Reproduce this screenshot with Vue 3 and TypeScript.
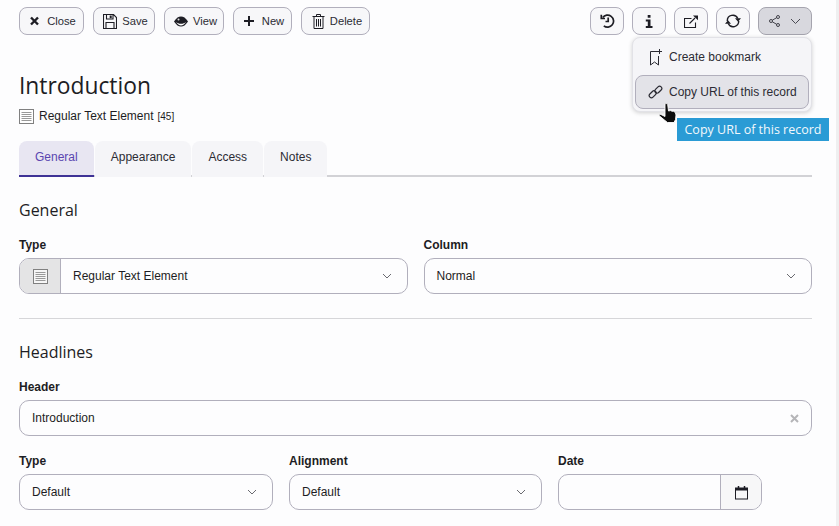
<script setup lang="ts">
const tabs = ['General', 'Appearance', 'Access', 'Notes']
</script>

<template>
  <div class="page">
    <main class="main">
      <div class="toolbar">
        <div class="group">
          <button class="btn" style="width: 65px">
            <svg class="glyph" width="9" height="10" viewBox="0 0 9 10"><path d="M1 1.500l7 7M8 1.500l-7 7" stroke="#1d1d24" stroke-width="2.400" fill="none" /></svg>
            Close
          </button>
          <button class="btn" style="width: 62px">
            <svg width="14" height="15" viewBox="0 0 14 15" fill="none" stroke="#1d1d24" stroke-width="1.100"><path d="M.5 .5h10l3 3v11H.5zM3.500 .5v4.500h6.500V.5M3 14.500V8.500h8v6" /><path d="M6.700 1.500h2v2.700h-2z" fill="#1d1d24" stroke="none" /></svg>
            Save
          </button>
          <button class="btn" style="width: 60px">
            <svg width="14" height="11" viewBox="0 0 14 11"><path d="M0 5.500C2.500 1.800 4.500 .5 7 .5s4.500 1.300 7 5c-2.500 3.700-4.500 5-7 5s-4.500-1.300-7-5z" fill="#1d1d24" /><path d="M1.700 5.800C3.500 8.300 5 9.400 7 9.400s3.500-1.100 5.300-3.600C10.500 7.200 9 7.800 7 7.800S3.500 7.200 1.700 5.800z" fill="#fff" /><circle cx="4.500" cy="3.500" r="1" fill="#ddd" /></svg>
            View
          </button>
          <button class="btn" style="width: 59px">
            <svg class="glyph" width="10" height="10" viewBox="0 0 10 10"><path d="M5 0v10M0 5h10" stroke="#1d1d24" stroke-width="2" fill="none" /></svg>
            New
          </button>
          <button class="btn" style="width: 69px">
            <svg width="13" height="15" viewBox="0 0 13 15" fill="none" stroke="#1d1d24"><path d="M.5 2.500h12M2 2.500v12h9v-12M4.500 2.500v-2h4v2M4.500 5v7.500M6.500 5v7.500M8.500 5v7.500" /></svg>
            Delete
          </button>
        </div>
        <div class="group right">
          <button class="btn icon">
            <svg width="15" height="14" viewBox="0 0 15 14" fill="none" stroke="#1d1d24" stroke-width="1.700"><path d="M2.700 3.600A6 6 0 1 1 3.800 11.800" /><path d="M1.300 .8v3.700h3.700" /><path d="M8.200 3.500v4H5.500" /></svg>
          </button>
          <button class="btn icon">
            <svg width="8" height="13" viewBox="0 0 8 13"><path d="M2.700 0h2.800v2.700H2.700zM.8 4.500h4.700v6.500H7.500v2H.8v-2h2V6.500h-2z" fill="#1d1d24" /></svg>
          </button>
          <button class="btn icon">
            <svg width="15" height="13" viewBox="0 0 15 13" fill="none" stroke="#1d1d24" stroke-width="1.100"><path d="M11.500 7.500v5H.5V3.500h7" /><path d="M5.500 8.500L11 3" /><path d="M9 .5h5v4.800z" fill="#1d1d24" stroke="none" /></svg>
          </button>
          <button class="btn icon">
            <svg width="16" height="14" viewBox="0 0 16 14" fill="none" stroke="#1d1d24" stroke-width="1.400"><path d="M2.300 7A5.500 5.500 0 0 1 12.800 4.500M13.700 7A5.500 5.500 0 0 1 3.200 9.500" /><path d="M10 4.300h6l-3 3.400zM6 9.700H0l3-3.400z" fill="#1d1d24" stroke="none" /></svg>
          </button>
          <button class="btn icon share">
            <svg width="11" height="12" viewBox="0 0 11 12" fill="none" stroke="#33333b" stroke-width=".9"><circle cx="2" cy="6" r="1.500" /><circle cx="9" cy="2" r="1.500" /><circle cx="9" cy="10" r="1.500" /><path d="M3.300 5.200l4.400-2.500M3.300 6.800l4.400 2.500" /></svg>
            <svg class="chev" width="11" height="7" viewBox="0 0 11 7" fill="none" stroke="#4a4a52"><path d="M1 1l4.500 4.500L10 1" /></svg>
          </button>

          <div class="menu">
            <div class="menu-item">
              <svg width="15" height="17" viewBox="0 0 15 17" fill="none" stroke="#2a2a32"><path d="M9.500 2.500H2.500v13.500l4-3 4 3V7" /><path d="M11.500 0v5M9 2.500h5" /></svg>
              Create bookmark
            </div>
            <div class="menu-item active">
              <svg width="15" height="14" viewBox="0 0 15 14" fill="none" stroke="#2a2a32" stroke-width="1.200">
                <rect x="6.300" y="2.500" width="8" height="4.400" rx="2.200" transform="rotate(-45 10.300 4.700)" />
                <rect x=".7" y="7.100" width="8" height="4.400" rx="2.200" transform="rotate(-45 4.700 9.300)" />
              </svg>
              Copy URL of this record
            </div>
          </div>
          <svg class="cursor" width="20" height="21" viewBox="0 0 20 21">
            <path d="M7 1.500c0-1.200 2.600-1.200 2.700 0L10.500 8l2-.4 1.500.6 1.600.1 1.700 1.200.7 2.500-.5 4.500-1.500 3H9.500L7 17.500 1.300 12.800c-.6-1 .4-1.800 1.700-1.300L7 13.500z" fill="#0c0c0c" stroke="#fff" stroke-width=".9" />
          </svg>
          <div class="tooltip">Copy URL of this record</div>
        </div>
      </div>

      <h1 class="title">Introduction</h1>
      <div class="subtitle">
        <svg width="15" height="15" viewBox="0 0 15 15"><rect x=".5" y=".5" width="14" height="14" fill="#fff" stroke="#808080" /><path d="M2.500 3.500h10M2.500 5.500h10M2.500 7.500h10M2.500 9.500h10M2.500 11.500h10" stroke="#999" fill="none" /></svg>
        <span>Regular Text Element</span>
        <small>[45]</small>
      </div>

      <nav class="tabs">
        <div v-for="(tab, i) in tabs" :key="tab" class="tab" :class="{ current: i === 0 }">{{ tab }}</div>
      </nav>

      <h2 class="section first">General</h2>
      <div class="row two">
        <div class="field">
          <label>Type</label>
          <div class="control">
            <div class="addon">
              <svg width="15" height="15" viewBox="0 0 15 15"><rect x=".5" y=".5" width="14" height="14" fill="#f6f6f6" stroke="#808080" /><path d="M2.500 3.500h10M2.500 5.500h10M2.500 7.500h10M2.500 9.500h10M2.500 11.500h10" stroke="#999" fill="none" /></svg>
            </div>
            <span class="value">Regular Text Element</span>
            <svg class="arrow" width="10" height="6" viewBox="0 0 10 6" fill="none" stroke="#6a6a70"><path d="M1 1l4 4 4-4" /></svg>
          </div>
        </div>
        <div class="field">
          <label>Column</label>
          <div class="control">
            <span class="value">Normal</span>
            <svg class="arrow" width="10" height="6" viewBox="0 0 10 6" fill="none" stroke="#6a6a70"><path d="M1 1l4 4 4-4" /></svg>
          </div>
        </div>
      </div>

      <hr class="divider" />

      <h2 class="section">Headlines</h2>
      <div class="field">
        <label>Header</label>
        <div class="control">
          <span class="value">Introduction</span>
          <svg class="clear" width="9" height="9" viewBox="0 0 9 9"><path d="M1 1l7 7M8 1l-7 7" stroke="#b5b5b8" stroke-width="2" fill="none" /></svg>
        </div>
      </div>
      <div class="row three">
        <div class="field">
          <label>Type</label>
          <div class="control">
            <span class="value">Default</span>
            <svg class="arrow" width="10" height="6" viewBox="0 0 10 6" fill="none" stroke="#6a6a70"><path d="M1 1l4 4 4-4" /></svg>
          </div>
        </div>
        <div class="field">
          <label>Alignment</label>
          <div class="control">
            <span class="value">Default</span>
            <svg class="arrow" width="10" height="6" viewBox="0 0 10 6" fill="none" stroke="#6a6a70"><path d="M1 1l4 4 4-4" /></svg>
          </div>
        </div>
        <div class="field date">
          <label>Date</label>
          <div class="control">
            <span class="value"></span>
            <div class="date-btn">
              <svg width="13" height="15" viewBox="0 0 13 15" fill="none" stroke="#1d1d24"><rect x=".5" y="3" width="12" height="11" stroke-width="1" /><path d="M.5 3.500h12v1.500H.5z" fill="#1d1d24" /><path d="M3.500 1v2.500M9.500 1v2.500" stroke-width="1.500" /></svg>
            </div>
          </div>
        </div>
      </div>
    </main>
    <div class="scrollbar"></div>
  </div>
</template>

<style scoped>
.page {
  display: flex;
  height: 526px;
  overflow: hidden;
  background: #fdfdfe;
  color: #1d1d24;
  font-family: 'Liberation Sans', Arial, sans-serif;
  font-size: 12px;
}

.main {
  flex: 1;
  min-width: 0;
  padding: 7px 24px 0 19px;
}

.scrollbar {
  width: 3px;
  background: #efeff0;
}

.toolbar {
  display: flex;
  justify-content: space-between;
}

.group {
  display: flex;
  gap: 9px;
}

.group.right {
  position: relative;
  gap: 8px;
}

.btn {
  height: 28px;
  padding: 0 0 0 3px;
  display: flex;
  align-items: center;
  justify-content: center;
  gap: 5px;
  border: 1px solid #b1afbc;
  border-radius: 8px;
  background: #f7f7f9;
  color: #2c2c34;
  font-family: inherit;
  font-size: 11.2px;
}

.btn .glyph {
  margin-right: 3px;
}

.btn.icon {
  width: 34px;
  padding: 0;
}

.btn.share {
  width: 54px;
  gap: 10px;
  background: #d8d8de;
  border-color: #a5a4ae;
}

.chev {
  margin-top: 1px;
}

.menu {
  position: absolute;
  top: 30px;
  right: 0;
  width: 180px;
  height: 75px;
  box-sizing: border-box;
  padding: 2px;
  display: flex;
  flex-direction: column;
  justify-content: flex-end;
  gap: 1px;
  border: 1px solid #e2e2e7;
  border-radius: 8px;
  background: #f5f5f8;
  box-shadow: 0 1px 4px rgba(0, 0, 0, 0.18);
}

.menu-item {
  height: 34px;
  flex: none;
  box-sizing: border-box;
  display: flex;
  align-items: center;
  gap: 6px;
  padding-left: 12px;
  border: 1px solid transparent;
  border-radius: 8px;
  color: #2c2c34;
}

.menu-item.active {
  background: #e3e3e8;
  border-color: #b1afbc;
}

.cursor {
  position: absolute;
  top: 96px;
  left: 68px;
}

.tooltip {
  position: absolute;
  top: 111px;
  left: 87px;
  width: 152px;
  height: 23px;
  line-height: 23px;
  text-align: center;
  background: #2a9bd5;
  color: #f2f8fc;
  font-family: 'Open Sans', sans-serif;
  font-size: 12.5px;
  white-space: nowrap;
}

.title {
  margin: 33px 0 0;
  height: 36px;
  line-height: 36px;
  font-family: 'Open Sans', sans-serif;
  font-size: 22.8px;
  font-weight: 400;
}

.subtitle {
  margin-top: 4px;
  height: 16px;
  display: flex;
  align-items: center;
  gap: 5px;
}

.subtitle small {
  font-size: 10px;
  margin-left: -1px;
}

.tabs {
  margin-top: 17px;
  display: flex;
  gap: 1px;
  border-bottom: 2px solid #d2d2d6;
}

.tab {
  height: 34px;
  line-height: 33px;
  padding: 0 16px;
  border-radius: 8px 8px 0 0;
  background: #f5f5f8;
  margin-bottom: -2px;
  border-bottom: 2px solid transparent;
  color: #2c2c34;
}

.tab.current {
  background: #e8e6f2;
  color: #5a45b0;
  border-bottom-color: #3f3296;
}

.section {
  margin: 0;
  height: 22px;
  line-height: 22px;
  font-family: 'Open Sans', sans-serif;
  font-size: 16px;
  font-weight: 400;
}

.section.first {
  margin-top: 22px;
}

.row {
  display: grid;
  gap: 16px;
}

.row.two {
  grid-template-columns: 1fr 1fr;
  margin-top: 17px;
}

.row.three {
  grid-template-columns: 254px 253px 204px;
  margin-top: 18px;
}

.section + .field {
  margin-top: 17px;
}

label {
  display: block;
  height: 20px;
  line-height: 15px;
  font-weight: 700;
}

.control {
  height: 36px;
  box-sizing: border-box;
  display: flex;
  align-items: center;
  border: 1px solid #b1afbc;
  border-radius: 10px;
  background: #fdfdfe;
  overflow: hidden;
}

.value {
  flex: 1;
  padding-left: 12px;
}

.addon {
  width: 40px;
  height: 100%;
  display: flex;
  align-items: center;
  justify-content: center;
  background: #e4e4e5;
  border-right: 1px solid #b1afbc;
}

.arrow {
  margin-right: 15px;
}

.clear {
  margin-right: 12px;
}

.date-btn {
  width: 40px;
  height: 100%;
  display: flex;
  align-items: center;
  justify-content: center;
  background: #f7f7f8;
  border-left: 1px solid #b1afbc;
}

.divider {
  margin: 24px 0 22px;
  border: 0;
  border-top: 1px solid #d6d6d9;
}
</style>
